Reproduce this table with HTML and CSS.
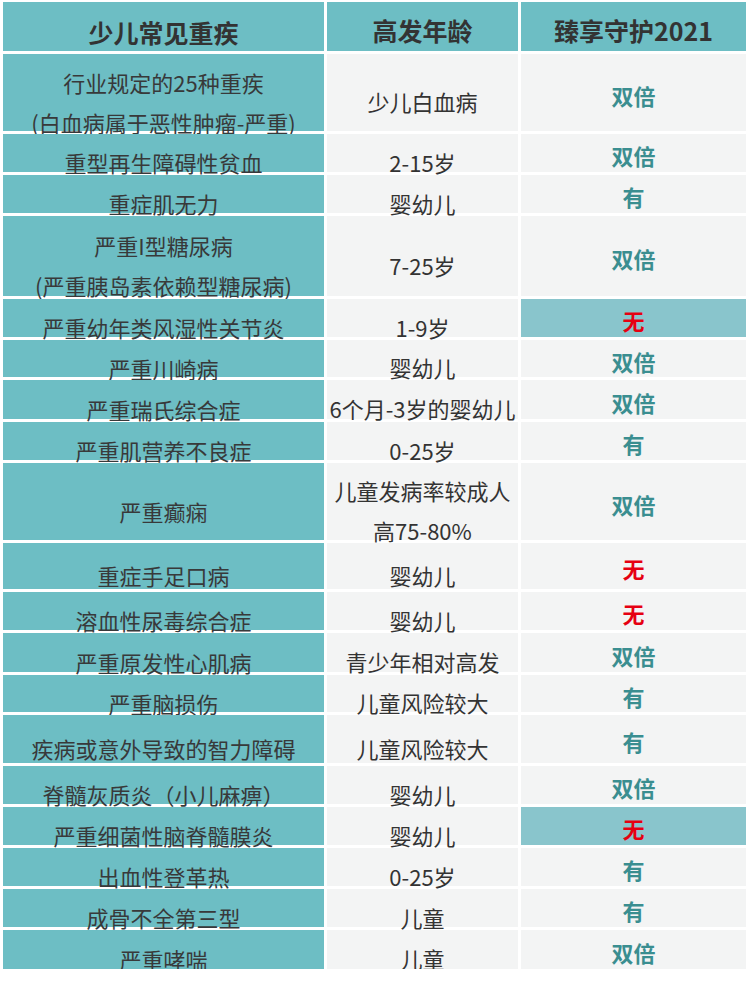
FILE: index.html
```html
<!DOCTYPE html>
<html lang="zh-CN">
<head>
<meta charset="utf-8">
<title>少儿常见重疾</title>
<link rel="stylesheet" href="styles.css">
</head>
<body>
<div class="table">
  <div class="cell head head1">少儿常见重疾</div>
  <div class="cell head">高发年龄</div>
  <div class="cell head">臻享守护2021</div>

  <div class="cell c1"><span class="lines">行业规定的25种重疾<br>(白血病属于恶性肿瘤-严重)</span></div>
  <div class="cell c2">少儿白血病</div>
  <div class="cell c3">双倍</div>

  <div class="cell c1">重型再生障碍性贫血</div>
  <div class="cell c2">2-15岁</div>
  <div class="cell c3">双倍</div>

  <div class="cell c1">重症肌无力</div>
  <div class="cell c2">婴幼儿</div>
  <div class="cell c3">有</div>

  <div class="cell c1"><span class="lines">严重I型糖尿病<br>(严重胰岛素依赖型糖尿病)</span></div>
  <div class="cell c2">7-25岁</div>
  <div class="cell c3">双倍</div>

  <div class="cell c1">严重幼年类风湿性关节炎</div>
  <div class="cell c2">1-9岁</div>
  <div class="cell c3 hl no">无</div>

  <div class="cell c1">严重川崎病</div>
  <div class="cell c2">婴幼儿</div>
  <div class="cell c3">双倍</div>

  <div class="cell c1">严重瑞氏综合症</div>
  <div class="cell c2">6个月-3岁的婴幼儿</div>
  <div class="cell c3">双倍</div>

  <div class="cell c1">严重肌营养不良症</div>
  <div class="cell c2">0-25岁</div>
  <div class="cell c3">有</div>

  <div class="cell c1">严重癫痫</div>
  <div class="cell c2"><span class="lines">儿童发病率较成人<br>高75-80%</span></div>
  <div class="cell c3">双倍</div>

  <div class="cell c1">重症手足口病</div>
  <div class="cell c2">婴幼儿</div>
  <div class="cell c3 no">无</div>

  <div class="cell c1">溶血性尿毒综合症</div>
  <div class="cell c2">婴幼儿</div>
  <div class="cell c3 no">无</div>

  <div class="cell c1">严重原发性心肌病</div>
  <div class="cell c2">青少年相对高发</div>
  <div class="cell c3">双倍</div>

  <div class="cell c1">严重脑损伤</div>
  <div class="cell c2">儿童风险较大</div>
  <div class="cell c3">有</div>

  <div class="cell c1">疾病或意外导致的智力障碍</div>
  <div class="cell c2">儿童风险较大</div>
  <div class="cell c3">有</div>

  <div class="cell c1">脊髓灰质炎（小儿麻痹）</div>
  <div class="cell c2">婴幼儿</div>
  <div class="cell c3">双倍</div>

  <div class="cell c1">严重细菌性脑脊髓膜炎</div>
  <div class="cell c2">婴幼儿</div>
  <div class="cell c3 hl no">无</div>

  <div class="cell c1">出血性登革热</div>
  <div class="cell c2">0-25岁</div>
  <div class="cell c3">有</div>

  <div class="cell c1">成骨不全第三型</div>
  <div class="cell c2">儿童</div>
  <div class="cell c3">有</div>

  <div class="cell c1">严重哮喘</div>
  <div class="cell c2">儿童</div>
  <div class="cell c3">双倍</div>
</div>
</body>
</html>
```

FILE: styles.css
```css
html, body {
  margin: 0;
  padding: 0;
  background: #ffffff;
}

body {
  font-family: "Noto Sans CJK SC", "Noto Sans", sans-serif;
  color: #333333;
}

.table {
  display: grid;
  grid-template-columns: 321px 191px 225px;
  grid-template-rows: 49px 77px 38px 38px 80px 38px 37px 39px 38px 77px 46px 38px 39px 37px 48px 38px 38px 38px 38px 39px;
  column-gap: 3px;
  row-gap: 3px;
  margin: 2px 0 0 3px;
  width: 743px;
}

.cell {
  display: flex;
  align-items: center;
  justify-content: center;
  text-align: center;
  font-size: 22px;
  line-height: 40px;
  box-sizing: border-box;
  overflow: visible;
  white-space: nowrap;
}

.lines {
  display: block;
}

.head {
  background: #6dbec4;
  font-size: 25px;
  font-weight: bold;
  color: #333333;
  line-height: 34px;
  padding-top: 7px;
}

.head1 {
  padding-top: 10px;
}

.c1 {
  background: #6dbec4;
  color: #38393a;
  padding-top: 18px;
}

.c2 {
  background: #f3f4f4;
  color: #333333;
  padding-top: 17px;
}

.c3 {
  background: #f3f4f4;
  color: #3a8e90;
  font-weight: bold;
  padding-top: 4px;
}

.c3.hl {
  background: #89c5cc;
}

.c3.no {
  color: #e60012;
}
```
